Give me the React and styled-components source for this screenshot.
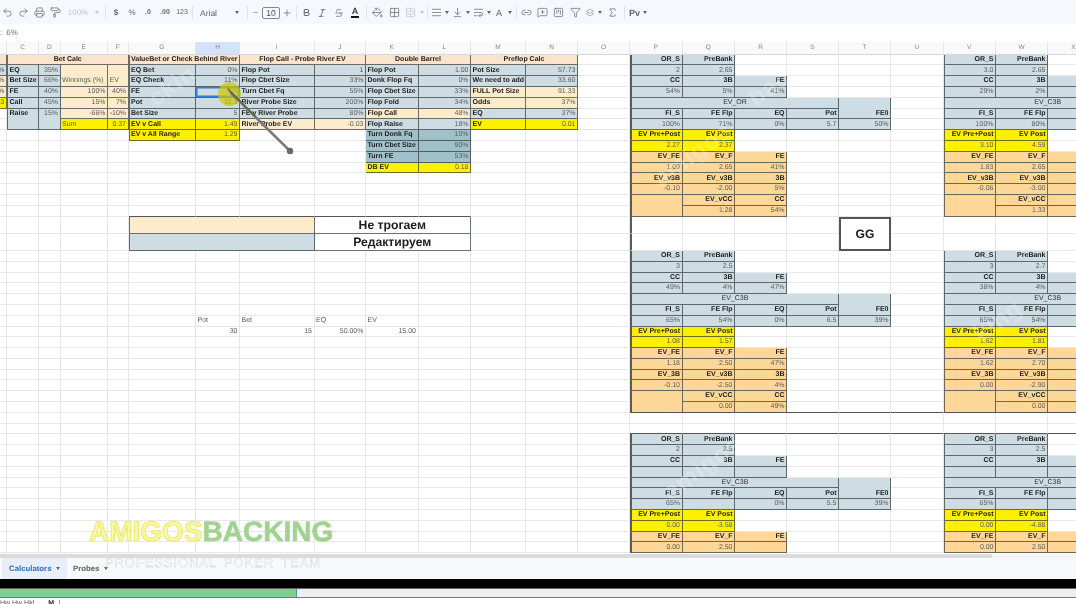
import React from 'react';
import styled, { createGlobalStyle } from 'styled-components';
import {
  Undo2, Redo2, Printer, PaintRoller, Bold, Italic, Strikethrough, PaintBucket, Grid2x2,
  TableCellsMerge, AlignJustify, ArrowDownToLine, WrapText, Link2, MessageSquarePlus,
  SquareKanban, Funnel, Layers2, Sigma, Minus, Plus,
} from 'lucide-react';

const GlobalStyle = createGlobalStyle`
  html, body { margin: 0; padding: 0; background: #fff; overflow: hidden; }
  body { font-family: "Liberation Sans", Arial, sans-serif; text-rendering: geometricPrecision; }
`;

const COLUMNS = [
  ['B', 7], ['C', 32], ['D', 21.5], ['E', 47.5], ['F', 20.5], ['G', 67.5], ['H', 44], ['I', 74.5],
  ['J', 51.5], ['K', 52.5], ['L', 52.5], ['M', 55], ['N', 52], ['O', 52], ['P', 52.5], ['Q', 52.5],
  ['R', 52], ['S', 52], ['T', 52], ['U', 52.5], ['V', 52.5], ['W', 52], ['X', 52], ['Y', 52],
];
const NAMES = COLUMNS.map((c) => c[0]);
const ROW_COUNT = 45;

const cells = {};
const put = (col, r, t, k, o = {}) => {
  if (r >= ROW_COUNT) return;
  cells[`${col}${r}`] = { t, k, ...o };
};
const lab = (col, r, t, k, o) => put(col, r, t, k, { b: 1, a: 'l', ...o });
const val = (col, r, t, k, o) => put(col, r, t, k, { a: 'r', ...o });
const pair = (c1, c2, r, t, v, k) => { lab(c1, r, t, k); val(c2, r, v, k); };

// Column B, just the edge of it is visible
val('B', 0, '', 'peach');
val('B', 1, '0%', 'blue');
val('B', 2, '%', 'cream');
val('B', 3, '%', 'cream');
val('B', 4, '83', 'yellow');

// Bet Calc
put('C', 0, 'Bet Calc', 'peach', { b: 1, a: 'c', cs: 4 });
pair('C', 'D', 1, 'EQ', '35%', 'blue');
pair('C', 'D', 2, 'Bet Size', '66%', 'blue');
pair('C', 'D', 3, 'FE', '40%', 'blue');
pair('C', 'D', 4, 'Call', '45%', 'blue');
lab('C', 5, 'Raise', 'blue', { rs: 2, v: 'top' });
val('D', 5, '15%', 'blue', { rs: 2, v: 'top' });
put('E', 1, 'Winnings (%)', 'cream', { a: 'l', rs: 2, v: 'bottom' });
put('F', 1, 'EV', 'cream', { a: 'l', rs: 2, v: 'bottom' });
val('E', 3, '100%', 'cream'); val('F', 3, '40%', 'cream');
val('E', 4, '15%', 'cream'); val('F', 4, '7%', 'cream');
val('E', 5, '-66%', 'cream'); val('F', 5, '-10%', 'cream');
put('E', 6, 'Sum', 'yellow', { a: 'l' }); val('F', 6, '0.37', 'yellow');

// ValueBet
put('G', 0, 'ValueBet or Check Behind River', 'peach', { b: 1, a: 'c', cs: 2 });
pair('G', 'H', 1, 'EQ Bet', '0%', 'blue');
pair('G', 'H', 2, 'EQ Check', '11%', 'blue');
pair('G', 'H', 3, 'FE', '6%', 'blue');
cells.H3.sel = 1;
pair('G', 'H', 4, 'Pot', '12.3', 'blue');
pair('G', 'H', 5, 'Bet Size', '5', 'blue');
pair('G', 'H', 6, 'EV v Call', '1.49', 'yellow');
pair('G', 'H', 7, 'EV v All Range', '1.29', 'yellow');

// Flop Call
put('I', 0, 'Flop Call - Probe River EV', 'peach', { b: 1, a: 'c', cs: 2 });
pair('I', 'J', 1, 'Flop Pot', '1', 'blue');
pair('I', 'J', 2, 'Flop Cbet Size', '33%', 'blue');
pair('I', 'J', 3, 'Turn Cbet Fq', '55%', 'blue');
pair('I', 'J', 4, 'River Probe Size', '200%', 'blue');
pair('I', 'J', 5, 'FE v River Probe', '80%', 'blue');
pair('I', 'J', 6, 'River Probe EV', '-0.03', 'cream');

// Double Barrel
put('K', 0, 'Double Barrel', 'peach', { b: 1, a: 'c', cs: 2 });
pair('K', 'L', 1, 'Flop Pot', '1.00', 'blue');
pair('K', 'L', 2, 'Donk Flop Fq', '0%', 'blue');
pair('K', 'L', 3, 'Flop Cbet Size', '33%', 'blue');
pair('K', 'L', 4, 'Flop Fold', '34%', 'blue');
pair('K', 'L', 5, 'Flop Call', '48%', 'cream');
pair('K', 'L', 6, 'Flop Raise', '18%', 'blue');
pair('K', 'L', 7, 'Turn Donk Fq', '10%', 'teal');
pair('K', 'L', 8, 'Turn Cbet Size', '90%', 'teal');
pair('K', 'L', 9, 'Turn FE', '53%', 'teal');
pair('K', 'L', 10, 'DB EV', '0.18', 'yellow');

// Preflop Calc
put('M', 0, 'Preflop Calc', 'peach', { b: 1, a: 'c', cs: 2 });
pair('M', 'N', 1, 'Pot Size', '57.73', 'blue');
pair('M', 'N', 2, 'We need to add', '33.60', 'blue');
pair('M', 'N', 3, 'FULL Pot Size', '91.33', 'cream');
pair('M', 'N', 4, 'Odds', '37%', 'cream');
pair('M', 'N', 5, 'EQ', '37%', 'blue');
pair('M', 'N', 6, 'EV', '0.01', 'yellow');

// Legend
put('G', 15, '', 'cream', { cs: 3 });
put('J', 15, 'Не трогаем', 'plain', { big: 1, a: 'c', cs: 3 });
put('G', 16, '', 'blue', { cs: 3 });
put('J', 16, 'Редактируем', 'plain', { big: 1, a: 'c', cs: 3 });
put('T', 15, 'GG', 'plain', { big: 1, gg: 1, a: 'c', cs: 1, rs: 2 });

// Loose numbers
['Pot', 'Bet', 'EQ', 'EV'].forEach((t, i) => put('HIJK'[i], 23, t, 'free', { a: 'l' }));
['30', '15', '50.00%', '15.00'].forEach((t, i) => put('HIJK'[i], 24, t, 'free', { a: 'r' }));

function block(start, col, d) {
  const at = NAMES.indexOf(col);
  const [A, B, C, D, E] = NAMES.slice(at, at + 5);
  const head = { b: 1, a: 'r' };
  const num = { a: 'r' };
  const line = (offset, names, texts, kind, o) =>
    names.forEach((n, i) => put(n, start + offset, texts[i], kind, o));
  line(0, [A, B], ['OR_S', 'PreBank'], 'blue', head);
  line(1, [A, B], [d.or, d.pre], 'blue', num);
  line(2, [A, B, C], ['CC', '3B', 'FE'], 'blue', head);
  line(3, [A, B, C], d.pct, 'blue', num);
  put(A, start + 4, d.title, 'blue', { a: 'c', cs: 4, ink: 1 });
  put(E, start + 4, 'FE0', 'blue', { b: 1, a: 'r', rs: 2, v: 'bottom' });
  line(5, [A, B, C, D], ['FI_S', 'FE Flp', 'EQ', 'Pot'], 'blue', head);
  line(6, [A, B, C, D, E], d.flop, 'blue', num);
  line(7, [A, B], ['EV Pre+Post', 'EV Post'], 'yellow', head);
  line(8, [A, B], d.ev, 'yellow', num);
  line(9, [A, B, C], ['EV_FE', 'EV_F', 'FE'], 'orange', head);
  line(10, [A, B, C], d.fe, 'orange', num);
  line(11, [A, B, C], [d.l3, 'EV_v3B', '3B'], 'orange', head);
  line(12, [A, B, C], d.v3, 'orange', num);
  put(A, start + 13, '', 'orange', { rs: 2 });
  line(13, [B, C], ['EV_vCC', 'CC'], 'orange', head);
  line(14, [B, C], d.cc, 'orange', num);
}

block(0, 'P', {
  or: '2', pre: '2.65', pct: ['54%', '5%', '41%'], title: 'EV_OR', flop: ['100%', '71%', '0%', '5.7', '50%'],
  ev: ['2.27', '2.37'], fe: ['1.09', '2.65', '41%'], l3: 'EV_v3B', v3: ['-0.10', '-2.00', '5%'], cc: ['1.28', '54%'],
});
block(17, 'P', {
  or: '3', pre: '2.5', pct: ['49%', '4%', '47%'], title: 'EV_C3B', flop: ['65%', '54%', '0%', '6.5', '39%'],
  ev: ['1.08', '1.57'], fe: ['1.18', '2.50', '47%'], l3: 'EV_3B', v3: ['-0.10', '-2.50', '4%'], cc: ['0.00', '49%'],
});
block(34, 'P', {
  or: '2', pre: '2.5', pct: ['', '', ''], title: 'EV_C3B', flop: ['65%', '', '0%', '5.5', '39%'],
  ev: ['0.00', '-3.58'], fe: ['0.00', '2.50', ''], l3: 'EV_3B', v3: ['', '', ''], cc: ['', ''],
});
block(0, 'V', {
  or: '3.0', pre: '2.65', pct: ['29%', '2%', ''], title: 'EV_C3B', flop: ['100%', '80%', '', '', ''],
  ev: ['3.10', '4.59'], fe: ['1.83', '2.65', ''], l3: 'EV_v3B', v3: ['-0.06', '-3.00', ''], cc: ['1.33', ''],
});
block(17, 'V', {
  or: '3', pre: '2.7', pct: ['36%', '4%', ''], title: 'EV_C3B', flop: ['65%', '54%', '', '', ''],
  ev: ['1.62', '1.81'], fe: ['1.62', '2.70', ''], l3: 'EV_3B', v3: ['0.00', '-2.90', ''], cc: ['0.00', ''],
});
block(34, 'V', {
  or: '3', pre: '2.5', pct: ['', '', ''], title: 'EV_C3B', flop: ['65%', '', '', '', ''],
  ev: ['0.00', '-4.88'], fe: ['0.00', '2.50', ''], l3: 'EV_3B', v3: ['', '', ''], cc: ['', ''],
});

const PCOL = NAMES.indexOf('P');
const inLegendTop = (c, r) => r === 14 && c >= NAMES.indexOf('G') && c <= NAMES.indexOf('L');
const inFrameLine = (c, r) => (r === 31 || r === 33) && c >= PCOL;
const onFrameLeft = (c, r) => c === PCOL && r !== 32 && r !== 33;

// walks the sheet row by row, grid auto placement does the rest
function buildSheet() {
  const taken = new Set();
  const out = [];
  for (let r = 0; r < ROW_COUNT; r++) {
    NAMES.forEach((name, c) => {
      if (taken.has(`${c}:${r}`)) return;
      const cell = cells[`${name}${r}`] || { t: '', k: 'empty' };
      const cs = cell.cs || 1;
      const rs = cell.rs || 1;
      for (let y = 0; y < rs; y++) for (let x = 0; x < cs; x++) taken.add(`${c + x}:${r + y}`);
      const bottom = r + rs - 1;
      out.push(
        <Cell
          key={`${name}${r}`}
          $kind={cell.k}
          $cs={cs}
          $rs={rs}
          $align={cell.a}
          $valign={cell.v}
          $bold={cell.b}
          $ink={cell.ink}
          $big={cell.big}
          $gg={cell.gg}
          $sel={cell.sel}
          $leftEdge={name === 'C' || name === 'G' ? r <= 16 && cell.k !== 'empty' : name === 'V' && cell.k !== 'empty'}
          $frame={onFrameLeft(c, r)}
          $lineBelow={inLegendTop(c, bottom) || inFrameLine(c, bottom)}
        >
          {cell.t}
        </Cell>
      );
    });
  }
  return out;
}

const FILLS = {
  empty: '#fff', free: '#fff', plain: '#fff', blue: '#cedce3', cream: '#fdeccb', peach: '#fce3cb',
  yellow: '#fff000', orange: '#fdd798', teal: '#a0c1c9',
};
const isGrid = (k) => k === 'empty' || k === 'free';

const Cell = styled.div`
  grid-column: span ${(p) => p.$cs};
  grid-row: span ${(p) => p.$rs};
  box-sizing: border-box;
  min-width: 0;
  overflow: hidden;
  white-space: nowrap;
  display: flex;
  padding: 0 1.5px;
  background: ${(p) => FILLS[p.$kind]};
  align-items: ${(p) => (p.$valign === 'top' ? 'flex-start' : p.$valign === 'bottom' ? 'flex-end' : 'center')};
  justify-content: ${(p) => (p.$align === 'r' ? 'flex-end' : p.$align === 'c' ? 'center' : 'flex-start')};
  font-size: ${(p) => (p.$big ? '12.2px' : '7px')};
  line-height: ${(p) => (p.$big ? '14px' : '9.5px')};
  font-weight: ${(p) => (p.$bold || p.$big ? 700 : 400)};
  color: ${(p) => (p.$bold || p.$big ? '#1d1d1d' : p.$ink ? '#333' : '#5c5c5c')};
  border-right: 1px solid ${(p) => (isGrid(p.$kind) ? '#e8e8e8' : 'rgba(40,48,50,.68)')};
  border-bottom: 1px solid ${(p) => (p.$lineBelow ? '#555' : isGrid(p.$kind) ? '#e8e8e8' : 'rgba(40,48,50,.68)')};
  ${(p) => p.$leftEdge && 'border-left: 1px solid rgba(40,48,50,.68);'}
  ${(p) => p.$frame && 'border-left: 2px solid #5a5a5a;'}
  ${(p) => p.$gg && 'border: 2px solid #555; align-items: center;'}
  ${(p) => p.$sel && 'box-shadow: inset 0 0 0 1.5px #2f7be6;'}
`;

const Page = styled.div`
  position: relative;
  width: 1076px;
  height: 604px;
  overflow: hidden;
  display: flex;
  flex-direction: column;
  background: #fff;
  filter: blur(0.42px);
`;

const Toolbar = styled.div`
  flex: 0 0 24px;
  display: flex;
  align-items: center;
  background: #f5f8fc;
  color: #5f6368;
  padding-top: 1px;
  box-sizing: border-box;
`;

const Tool = styled.div`
  flex: 0 0 ${(p) => p.$w}px;
  width: ${(p) => p.$w}px;
  display: flex;
  align-items: center;
  justify-content: ${(p) => (p.$left ? 'flex-start' : 'center')};
  padding-left: ${(p) => (p.$left ? 5 : 0)}px;
  box-sizing: border-box;
  font-size: ${(p) => p.$size || 8}px;
  font-weight: ${(p) => (p.$strong ? 700 : 400)};
  color: ${(p) => (p.$faded ? '#c2c5c9' : '#5f6368')};
  white-space: nowrap;
`;

const ToolCaret = styled.span`
  width: 0;
  height: 0;
  border-left: 2.5px solid transparent;
  border-right: 2.5px solid transparent;
  border-top: 3px solid ${(p) => (p.$faded ? '#c3c6ca' : '#5f6368')};
`;

const ToolSep = styled.span`
  width: 1px;
  height: 13px;
  background: #e0e3e8;
`;

const SizeBox = styled.div`
  flex: 0 0 18px;
  margin-left: 3px;
  height: 12px;
  border: 1px solid #85888c;
  border-radius: 2px;
  box-sizing: border-box;
  display: flex;
  align-items: center;
  justify-content: center;
  font-size: 8.5px;
  color: #4a4d51;
`;

const ColorA = styled.span`
  font-weight: 700;
  font-size: 9px;
  line-height: 9px;
  color: #444;
  border-bottom: 2px solid #111;
  padding: 0 1px;
`;

const FormulaBar = styled.div`
  flex: 0 0 17.6px;
  display: flex;
  align-items: center;
  gap: 4px;
  font-size: 8px;
  color: #6d6f72;
  background: #fff;
`;

const SheetArea = styled.div`
  flex: 0 0 512px;
  position: relative;
  overflow: hidden;
`;

const Grid = styled.div`
  display: grid;
  width: 1204px;
  grid-template-columns: ${COLUMNS.map((c) => `${c[1]}px`).join(' ')};
  grid-template-rows: 13px repeat(15, 10.8px) 17.2px 17.2px repeat(28, 10.8px);
`;

const ColHead = styled.div`
  box-sizing: border-box;
  display: flex;
  align-items: center;
  justify-content: center;
  overflow: hidden;
  font-size: 6.5px;
  color: #85888b;
  background: ${(p) => (p.$active ? '#d4e3fb' : '#f8f9fa')};
  border-right: 1px solid #e3e5e8;
  border-bottom: 1px solid #d6d8db;
`;

const ScrollTrack = styled.div`
  flex: 0 0 4px;
  background: #f3f4f5;
`;

const ScrollThumb = styled.div`
  width: 992px;
  height: 100%;
  background: #d9dbdd;
`;

const TabBar = styled.div`
  flex: 0 0 21px;
  display: flex;
  align-items: stretch;
  padding-left: 2px;
  background: #f8f9fa;
`;

const Tab = styled.div`
  display: flex;
  align-items: center;
  gap: 5px;
  box-sizing: border-box;
  width: ${(p) => p.$w}px;
  padding-left: ${(p) => (p.$active ? 7 : 6)}px;
  font-size: 7.8px;
  font-weight: 700;
  color: ${(p) => (p.$active ? '#2d6cb5' : '#5d6065')};
  background: ${(p) => (p.$active ? '#e8eff9' : 'transparent')};
`;

const BlackBar = styled.div`
  flex: 0 0 9px;
  background: #000;
`;

const ProgressTrack = styled.div`
  flex: 0 0 10px;
  box-sizing: border-box;
  background: #eeeeee;
  border-top: 1px solid #666;
  border-bottom: 1px solid #777;
`;

const ProgressFill = styled.div`
  height: 100%;
  background: #7ecf92;
  border-right: 1px solid #4aa08f;
`;

const Footer = styled.div`
  flex: 1;
  display: flex;
  align-items: flex-start;
  gap: 6px;
  font-size: 7px;
  line-height: 8px;
  padding-top: 2px;
  color: #555;
`;

const FooterMark = styled.span`
  padding-left: 8px;
  padding-right: 5px;
  border-right: 1px solid #999;
  font-weight: 700;
  color: #222;
`;

const Watermark = styled.div`
  position: absolute;
  left: ${(p) => p.$x}px;
  top: ${(p) => p.$y}px;
  transform: rotate(-36deg);
  transform-origin: left bottom;
  font-size: 24px;
  font-weight: 700;
  letter-spacing: 1px;
  color: rgba(255, 255, 255, 0.24);
  white-space: nowrap;
  pointer-events: none;
`;

const Highlighter = styled.div`
  position: absolute;
  left: 218px;
  top: 82px;
  width: 23px;
  height: 24px;
  border-radius: 50%;
  background: rgba(205, 200, 10, 0.72);
`;

const PenStroke = styled.svg`
  position: absolute;
  left: 225px;
  top: 85px;
  pointer-events: none;
`;

const Logo = styled.div`
  position: absolute;
  left: 89px;
  top: 516px;
  display: flex;
  font-size: 28px;
  line-height: 32px;
  font-weight: 700;
  white-space: nowrap;
`;

const LogoYellow = styled.span`
  color: #f9f7a8;
  -webkit-text-stroke: 1px #eee96a;
`;

const LogoGreen = styled.span`
  color: #a2d290;
  -webkit-text-stroke: 0.6px #a2d290;
`;

const LogoSub = styled.div`
  position: absolute;
  left: 105px;
  top: 555px;
  font-size: 13px;
  line-height: 15px;
  font-weight: 400;
  letter-spacing: 0.9px;
  word-spacing: 3px;
  color: rgba(255, 255, 255, 0.9);
  -webkit-text-stroke: 0.3px #c4c6c4;
  white-space: nowrap;
`;

const IC = { size: 11, strokeWidth: 1.5 };

export default function App() {
  return (
    <Page>
      <GlobalStyle />
      <Toolbar>
        <Tool $w={15}><Undo2 {...IC} /></Tool>
        <Tool $w={16}><Redo2 {...IC} /></Tool>
        <Tool $w={16}><Printer {...IC} /></Tool>
        <Tool $w={16}><PaintRoller {...IC} /></Tool>
        <Tool $w={30} $faded>100%</Tool>
        <Tool $w={8}><ToolCaret $faded /></Tool>
        <Tool $w={8}><ToolSep /></Tool>
        <Tool $w={14} $strong>$</Tool>
        <Tool $w={18}>%</Tool>
        <Tool $w={14} $size={7} $strong>.0</Tool>
        <Tool $w={20} $size={7} $strong>.00</Tool>
        <Tool $w={14} $size={7}>123</Tool>
        <Tool $w={6}><ToolSep /></Tool>
        <Tool $w={37} $left $size={8.5}>Arial</Tool>
        <Tool $w={10}><ToolCaret /></Tool>
        <Tool $w={10}><ToolSep /></Tool>
        <Tool $w={7}><Minus size={9} strokeWidth={1.6} /></Tool>
        <SizeBox>10</SizeBox>
        <Tool $w={14}><Plus size={10} strokeWidth={1.6} /></Tool>
        <Tool $w={4}><ToolSep /></Tool>
        <Tool $w={16}><Bold size={9} strokeWidth={2.6} /></Tool>
        <Tool $w={16}><Italic size={10} strokeWidth={2} /></Tool>
        <Tool $w={17}><Strikethrough size={10} strokeWidth={1.6} /></Tool>
        <Tool $w={16}><ColorA>A</ColorA></Tool>
        <Tool $w={6}><ToolSep /></Tool>
        <Tool $w={16}><PaintBucket {...IC} /></Tool>
        <Tool $w={18}><Grid2x2 {...IC} /></Tool>
        <Tool $w={15} $faded><TableCellsMerge {...IC} /></Tool>
        <Tool $w={8}><ToolCaret $faded /></Tool>
        <Tool $w={3}><ToolSep /></Tool>
        <Tool $w={15}><AlignJustify {...IC} /></Tool>
        <Tool $w={5}><ToolCaret /></Tool>
        <Tool $w={16}><ArrowDownToLine {...IC} /></Tool>
        <Tool $w={5}><ToolCaret /></Tool>
        <Tool $w={16}><WrapText {...IC} /></Tool>
        <Tool $w={5}><ToolCaret /></Tool>
        <Tool $w={16} $size={9}>A</Tool>
        <Tool $w={5}><ToolCaret /></Tool>
        <Tool $w={8}><ToolSep /></Tool>
        <Tool $w={12}><Link2 {...IC} /></Tool>
        <Tool $w={20}><MessageSquarePlus {...IC} /></Tool>
        <Tool $w={12}><SquareKanban {...IC} /></Tool>
        <Tool $w={22}><Funnel {...IC} /></Tool>
        <Tool $w={8}><Layers2 {...IC} /></Tool>
        <Tool $w={12}><ToolCaret /></Tool>
        <Tool $w={12}><Sigma {...IC} /></Tool>
        <Tool $w={12}><ToolSep /></Tool>
        <Tool $w={9} $size={9} $strong>Pv</Tool>
        <Tool $w={11}><ToolCaret /></Tool>
      </Toolbar>

      <FormulaBar>
        <span>:</span>
        <span>6%</span>
      </FormulaBar>

      <SheetArea>
        <Grid>
          {COLUMNS.map(([name]) => (
            <ColHead key={name} $active={name === 'H'}>{name === 'B' ? '' : name}</ColHead>
          ))}
          {buildSheet()}
        </Grid>
      </SheetArea>

      <ScrollTrack><ScrollThumb /></ScrollTrack>

      <TabBar>
        <Tab $active $w={65}>Calculators <ToolCaret /></Tab>
        <Tab $w={60}>Probes <ToolCaret /></Tab>
      </TabBar>

      <BlackBar />
      <ProgressTrack><ProgressFill style={{ width: `${(296 / 1076) * 100}%` }} /></ProgressTrack>
      <Footer>
        <span>Hw Hw Hkl</span>
        <FooterMark>M</FooterMark>
      </Footer>

      <Highlighter />
      <PenStroke width="72" height="74" viewBox="0 0 72 74">
        <path d="M6 8 L64 65" stroke="#7b7b7b" strokeWidth="2.6" strokeLinecap="round" fill="none" />
        <path d="M3 4 L30 31" stroke="#5f5f3a" strokeWidth="1.3" strokeLinecap="round" fill="none" />
        <circle cx="65" cy="66" r="3.2" fill="#666" />
      </PenStroke>

      <Watermark $x={160} $y={85}>ckin</Watermark>
      <Watermark $x={665} $y={165}>amigos</Watermark>
      <Watermark $x={985} $y={320}>king</Watermark>
      <Watermark $x={675} $y={478}>amigos</Watermark>
      <Watermark $x={760} $y={85}>back</Watermark>

      <Logo>
        <LogoYellow>AMIGOS</LogoYellow>
        <LogoGreen>BACKING</LogoGreen>
      </Logo>
      <LogoSub>PROFESSIONAL POKER TEAM</LogoSub>
    </Page>
  );
}
